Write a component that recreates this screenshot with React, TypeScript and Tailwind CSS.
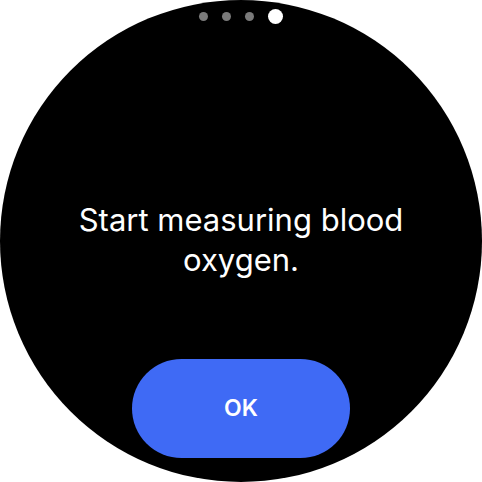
export default function App() {
  return (
    <div className="flex h-[482px] w-[482px] items-center justify-center bg-white">
      <div className="flex h-[482px] w-[482px] flex-col items-center overflow-hidden rounded-full bg-black font-['Inter',sans-serif]">
        {/* page indicator */}
        <div className="mt-[9px] flex h-[14px] items-center gap-[14px]">
          <span className="h-[9px] w-[9px] rounded-full bg-[#7a7a7a]" />
          <span className="h-[9px] w-[9px] rounded-full bg-[#7a7a7a]" />
          <span className="h-[9px] w-[9px] rounded-full bg-[#7a7a7a]" />
          <span className="h-[15px] w-[15px] rounded-full bg-white" />
        </div>

        <p className="mt-[177px] w-[380px] text-center text-[31px] leading-[40px] text-white">
          Start measuring blood oxygen.
        </p>

        <button className="mt-[79px] flex h-[99px] w-[218px] items-center justify-center rounded-full bg-[#3f6af5] text-[23px] font-semibold text-white">
          OK
        </button>
      </div>
    </div>
  );
}
